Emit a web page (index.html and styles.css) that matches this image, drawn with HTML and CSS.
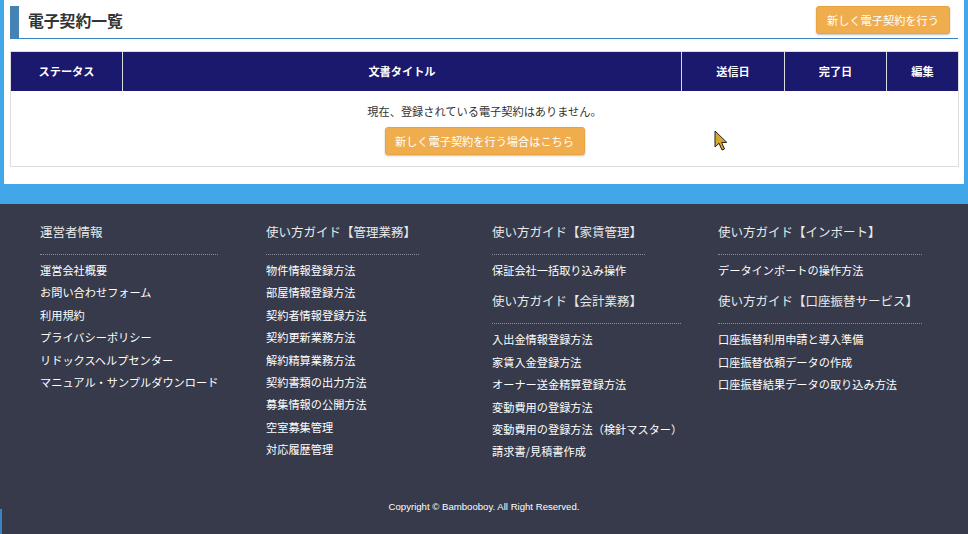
FILE: index.html
```html
<!DOCTYPE html>
<html lang="ja">
<head>
<meta charset="utf-8">
<title>電子契約一覧</title>
<link rel="stylesheet" href="styles.css">
</head>
<body>
<div class="main">
  <div class="title-bar">
    <h1 class="title">電子契約一覧</h1>
    <button class="btn btn-top">新しく電子契約を行う</button>
  </div>
  <table class="contracts">
    <colgroup>
      <col class="c-status"><col class="c-title"><col class="c-sent"><col class="c-done"><col class="c-edit">
    </colgroup>
    <thead>
      <tr><th>ステータス</th><th>文書タイトル</th><th>送信日</th><th>完了日</th><th>編集</th></tr>
    </thead>
    <tbody>
      <tr>
        <td colspan="5" class="empty">
          <p class="empty-msg">現在、登録されている電子契約はありません。</p>
          <button class="btn btn-empty">新しく電子契約を行う場合はこちら</button>
        </td>
      </tr>
    </tbody>
  </table>
</div>
<footer class="footer">
  <div class="footer-nav">
    <div class="fcol">
      <div class="fsec w178">
        <h3 class="fhead">運営者情報</h3>
        <ul class="flist">
          <li>運営会社概要</li>
          <li>お問い合わせフォーム</li>
          <li>利用規約</li>
          <li>プライバシーポリシー</li>
          <li>リドックスヘルプセンター</li>
          <li>マニュアル・サンプルダウンロード</li>
        </ul>
      </div>
    </div>
    <div class="fcol">
      <div class="fsec w153">
        <h3 class="fhead">使い方ガイド【管理業務】</h3>
        <ul class="flist">
          <li>物件情報登録方法</li>
          <li>部屋情報登録方法</li>
          <li>契約者情報登録方法</li>
          <li>契約更新業務方法</li>
          <li>解約精算業務方法</li>
          <li>契約書類の出力方法</li>
          <li>募集情報の公開方法</li>
          <li>空室募集管理</li>
          <li>対応履歴管理</li>
        </ul>
      </div>
    </div>
    <div class="fcol">
      <div class="fsec w153">
        <h3 class="fhead">使い方ガイド【家賃管理】</h3>
        <ul class="flist">
          <li>保証会社一括取り込み操作</li>
        </ul>
      </div>
      <div class="fsec w189">
        <h3 class="fhead">使い方ガイド【会計業務】</h3>
        <ul class="flist">
          <li>入出金情報登録方法</li>
          <li>家賃入金登録方法</li>
          <li>オーナー送金精算登録方法</li>
          <li>変動費用の登録方法</li>
          <li>変動費用の登録方法（検針マスター）</li>
          <li>請求書/見積書作成</li>
        </ul>
      </div>
    </div>
    <div class="fcol">
      <div class="fsec w204">
        <h3 class="fhead">使い方ガイド【インポート】</h3>
        <ul class="flist">
          <li>データインポートの操作方法</li>
        </ul>
      </div>
      <div class="fsec w204">
        <h3 class="fhead">使い方ガイド【口座振替サービス】</h3>
        <ul class="flist">
          <li>口座振替利用申請と導入準備</li>
          <li>口座振替依頼データの作成</li>
          <li>口座振替結果データの取り込み方法</li>
        </ul>
      </div>
    </div>
  </div>
  <p class="copyright">Copyright © Bambooboy. All Right Reserved.</p>
</footer>
<div class="edge-tab"></div>
<svg class="cursor" width="14" height="22" viewBox="0 0 14 22">
  <path d="M1 1 L1 17 L5 13.2 L8 20 L10.5 19 L7.6 12.4 L12.8 12.4 Z" fill="#d6a52b" stroke="#222" stroke-width="1" stroke-linejoin="round"/>
</svg>
</body>
</html>
```
FILE: styles.css
```css
html, body {
  margin: 0;
  padding: 0;
}
body {
  background: #41a7e8;
  font-family: "Noto Sans CJK JP", "Noto Sans", sans-serif;
  font-size: 11.2px;
  color: #333;
  width: 968px;
  height: 534px;
  overflow: hidden;
  position: relative;
}
.main {
  background: #fff;
  margin: 0 4px 20px;
  padding: 6px 6px 0;
  height: 178px;
}
.title-bar {
  display: flex;
  justify-content: space-between;
  align-items: flex-start;
  border-bottom: 1.5px solid #3a84c2;
  height: 32px;
}
.title {
  margin: 0;
  height: 32px;
  line-height: 30px;
  border-left: 9px solid #4682b4;
  padding-left: 9px;
  font-size: 15.8px;
  font-weight: bold;
  color: #333;
  letter-spacing: 0;
}
.btn {
  font-family: inherit;
  font-size: 11.2px;
  color: #fff;
  background: #f0ad4e;
  border: 1px solid #eaa43f;
  border-radius: 3px;
  box-shadow: 0 1px 2px rgba(0,0,0,0.25);
  height: 28px;
  padding: 0;
  line-height: 26px;
  cursor: pointer;
}
.btn-top {
  width: 134px;
  margin-right: 8px;
}
.btn-empty {
  width: 200px;
}
.contracts {
  margin-top: 11.5px;
  width: 948px;
  border-collapse: collapse;
  table-layout: fixed;
  border: 1px solid #ddd;
}
.c-status { width: 112px; }
.c-title { width: 559px; }
.c-sent { width: 103px; }
.c-done { width: 102px; }
.c-edit { width: 72px; }
.contracts th {
  background: #1a196d;
  color: #fff;
  font-weight: bold;
  font-size: 11.2px;
  height: 39px;
  padding: 0;
  border: 1px solid #ddd;
  border-top: none;
  border-bottom: none;
  text-align: center;
}
.contracts td {
  padding: 0;
}
.empty {
  text-align: center;
  height: 75px;
  vertical-align: top;
}
.empty-msg {
  margin: 11px 0 0;
  line-height: 18px;
  color: #333;
}
.empty .btn-empty {
  margin-top: 7px;
}
.footer {
  background: #363a4a;
  height: 330px;
  display: flex;
  flex-direction: column;
  box-sizing: border-box;
  padding-top: 19px;
}
.footer-nav {
  display: grid;
  grid-template-columns: repeat(4, 226px);
  padding-left: 40px;
}
.fsec {
  margin-bottom: 11px;
}
.w178 { width: 178px; }
.w153 { width: 153px; }
.w189 { width: 189px; }
.w204 { width: 204px; }
.fhead {
  margin: 0;
  font-size: 12.5px;
  font-weight: normal;
  color: #eaeaea;
  line-height: 18px;
  padding-bottom: 13px;
  border-bottom: 1px dotted #8a8d98;
  white-space: nowrap;
}
.flist {
  list-style: none;
  margin: 4px 0 0;
  padding: 0;
}
.flist li {
  color: #fff;
  line-height: 22.4px;
  font-size: 11.2px;
  white-space: nowrap;
}
.copyright {
  margin: auto 0 0;
  padding-bottom: 21px;
  text-align: center;
  font-family: "Liberation Sans", Arial, sans-serif;
  font-size: 9.6px;
  line-height: 12px;
  color: #fff;
  padding-left: 0;
}
.edge-tab {
  position: absolute;
  left: 0;
  top: 509px;
  width: 2px;
  height: 25px;
  background: #3a84c2;
}
.cursor {
  position: absolute;
  left: 714px;
  top: 130px;
}
```
